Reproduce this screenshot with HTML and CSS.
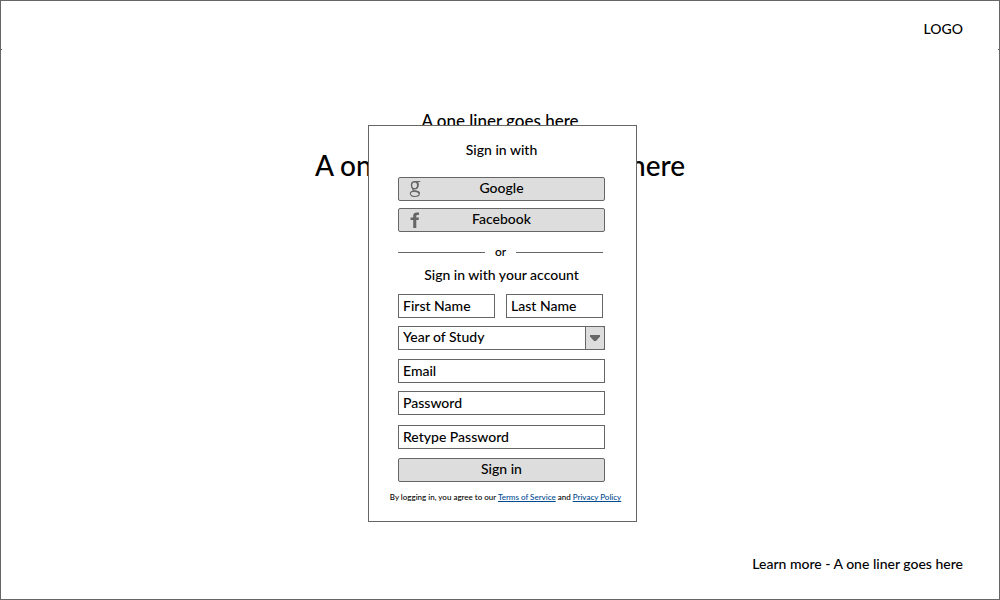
FILE: index.html
```html
<!DOCTYPE html>
<html lang="en">
<head>
<meta charset="utf-8">
<meta name="viewport" content="width=device-width, initial-scale=1">
<title>Sign in</title>
<link rel="stylesheet" href="styles.css">
</head>
<body>
<div class="page">
  <header class="header"><span class="logo">LOGO</span></header>
  <main class="hero">
    <p class="tagline">A one liner goes here</p>
    <h1 class="headline">A one liner headline goes here</h1>
  </main>
  <footer class="footer">Learn more - A one liner goes here</footer>

  <form class="dialog" aria-label="Sign in">
    <h2 class="title">Sign in with</h2>
    <div class="social">
      <button class="button" type="button">
        <svg class="icon" viewBox="0 0 14 18" aria-hidden="true">
          <g fill="none" stroke="currentColor">
            <ellipse cx="5.600" cy="5.200" rx="3.100" ry="3.500" stroke-width="1.400"/>
            <path d="M5.600 1.500h5.600M8.200 1.800c1.500 1.200 1.500 4.600-.2 6.200M4.600 8.500c-1.600 1.400-.6 2 1.200 2.600" stroke-width="1.100"/>
            <ellipse cx="5.800" cy="13.800" rx="4.500" ry="2.700" stroke-width="1.100"/>
            <path d="M6 11.200c2.600.3 4.400 1 4.200 2.600" stroke-width="1.500"/>
          </g>
        </svg>
        Google
      </button>
      <button class="button" type="button">
        <svg class="icon" viewBox="0 0 14 18" aria-hidden="true">
          <path fill="currentColor" d="M4.200 17V9H1.500V6.400h2.700V4.800C4.200 2.400 5.600 1.500 7.800 1.500H10v2.600H8.700C7.600 4.100 7.300 4.500 7.300 5.300v1.100H10L9.600 9H7.300v8z"/>
        </svg>
        Facebook
      </button>
    </div>
    <div class="divider"><span class="or">or</span></div>
    <h2 class="title account">Sign in with your account</h2>
    <div class="names">
      <input class="field" type="text" placeholder="First Name" aria-label="First Name">
      <input class="field" type="text" placeholder="Last Name" aria-label="Last Name">
    </div>
    <div class="picker">
      <select class="field" aria-label="Year of Study"><option>Year of Study</option></select>
      <span class="arrow"><svg class="caret" viewBox="0 0 10 6" aria-hidden="true"><path fill="currentColor" d="M0 0h10v1.500L6 6H4L0 1.500z"/></svg></span>
    </div>
    <input class="field email" type="email" placeholder="Email" aria-label="Email">
    <input class="field" type="password" placeholder="Password" aria-label="Password">
    <input class="field retype" type="password" placeholder="Retype Password" aria-label="Retype Password">
    <button class="button submit" type="submit">Sign in</button>
    <p class="terms">By logging in, you agree to our <a class="link" href="#terms">Terms of Service</a> and <a class="link" href="#privacy">Privacy Policy</a></p>
  </form>
</div>
</body>
</html>
```
FILE: styles.css
```css
* {
  box-sizing: border-box;
}

body {
  margin: 0;
  background: #fff;
  color: #000;
  font: 500 14px/16px Lato, "Open Sans", sans-serif;
}

h1,
h2,
p {
  margin: 0;
  font-weight: inherit;
}

.page {
  position: relative;
  display: flex;
  flex-direction: column;
  min-height: 100vh;
  border: 1px solid #666;
}

.header {
  display: flex;
  justify-content: flex-end;
  padding: 20px 36px 13px;
  background:
    linear-gradient(#666, #666) left bottom / 1px 1px no-repeat,
    linear-gradient(#666, #666) right bottom / 1px 1px no-repeat;
}

.hero {
  flex: 1;
  padding-top: 61px;
  text-align: center;
}

.tagline {
  font-size: 17px;
  line-height: 20px;
}

.headline {
  margin-top: 16px;
  font-size: 28px;
  line-height: 36px;
}

.footer {
  padding: 0 36px 27px;
  text-align: right;
}

.dialog {
  position: absolute;
  top: 124px;
  left: 50%;
  display: flex;
  flex-direction: column;
  width: 269px;
  margin-left: -132px;
  padding: 16px 31px 16px 29px;
  border: 1px solid #666;
  background: #fff;
}

.title {
  font-size: 14px;
  line-height: 16px;
  text-align: center;
}

.social {
  display: flex;
  flex-direction: column;
  gap: 7px;
  margin-top: 19px;
}

.button {
  position: relative;
  height: 24px;
  padding: 0 0 2px;
  border: 1px solid #666;
  border-radius: 2px;
  background: #ddd;
  color: inherit;
  font: inherit;
}

.icon {
  position: absolute;
  top: 2px;
  left: 10px;
  width: 14px;
  height: 18px;
  color: #666;
}

.divider {
  display: flex;
  align-items: center;
  gap: 10px;
  margin: 12px 2px 0 0;
}

.divider::before,
.divider::after {
  content: "";
  flex: 1;
  border-top: 1px solid #666;
}

.or {
  font-size: 12px;
}

.account {
  margin-top: 7px;
}

.names {
  display: grid;
  grid-template-columns: 1fr 1fr;
  gap: 11px;
  margin: 11px 2px 8px 0;
}

.field {
  width: 100%;
  min-width: 0;
  height: 24px;
  padding: 0 4px 2px;
  border: 1px solid #666;
  border-radius: 0;
  background: #fff;
  color: inherit;
  font: inherit;
  appearance: none;
}

.field::placeholder {
  color: #000;
  opacity: 1;
}

.picker {
  position: relative;
  display: flex;
}

.arrow {
  position: absolute;
  top: 0;
  right: 0;
  display: grid;
  place-items: center;
  width: 20px;
  height: 24px;
  border: 1px solid #666;
  border-radius: 0 2px 2px 0;
  background: #ddd;
  color: #666;
  pointer-events: none;
}

.caret {
  width: 10px;
  height: 6px;
}

.email {
  margin: 9px 0 8px;
}

.retype {
  margin: 10px 0 9px;
}

.terms {
  align-self: center;
  margin: 7px 0 0 8px;
  font-size: 8px;
  white-space: nowrap;
}

.link {
  color: #004a8f;
}
```
